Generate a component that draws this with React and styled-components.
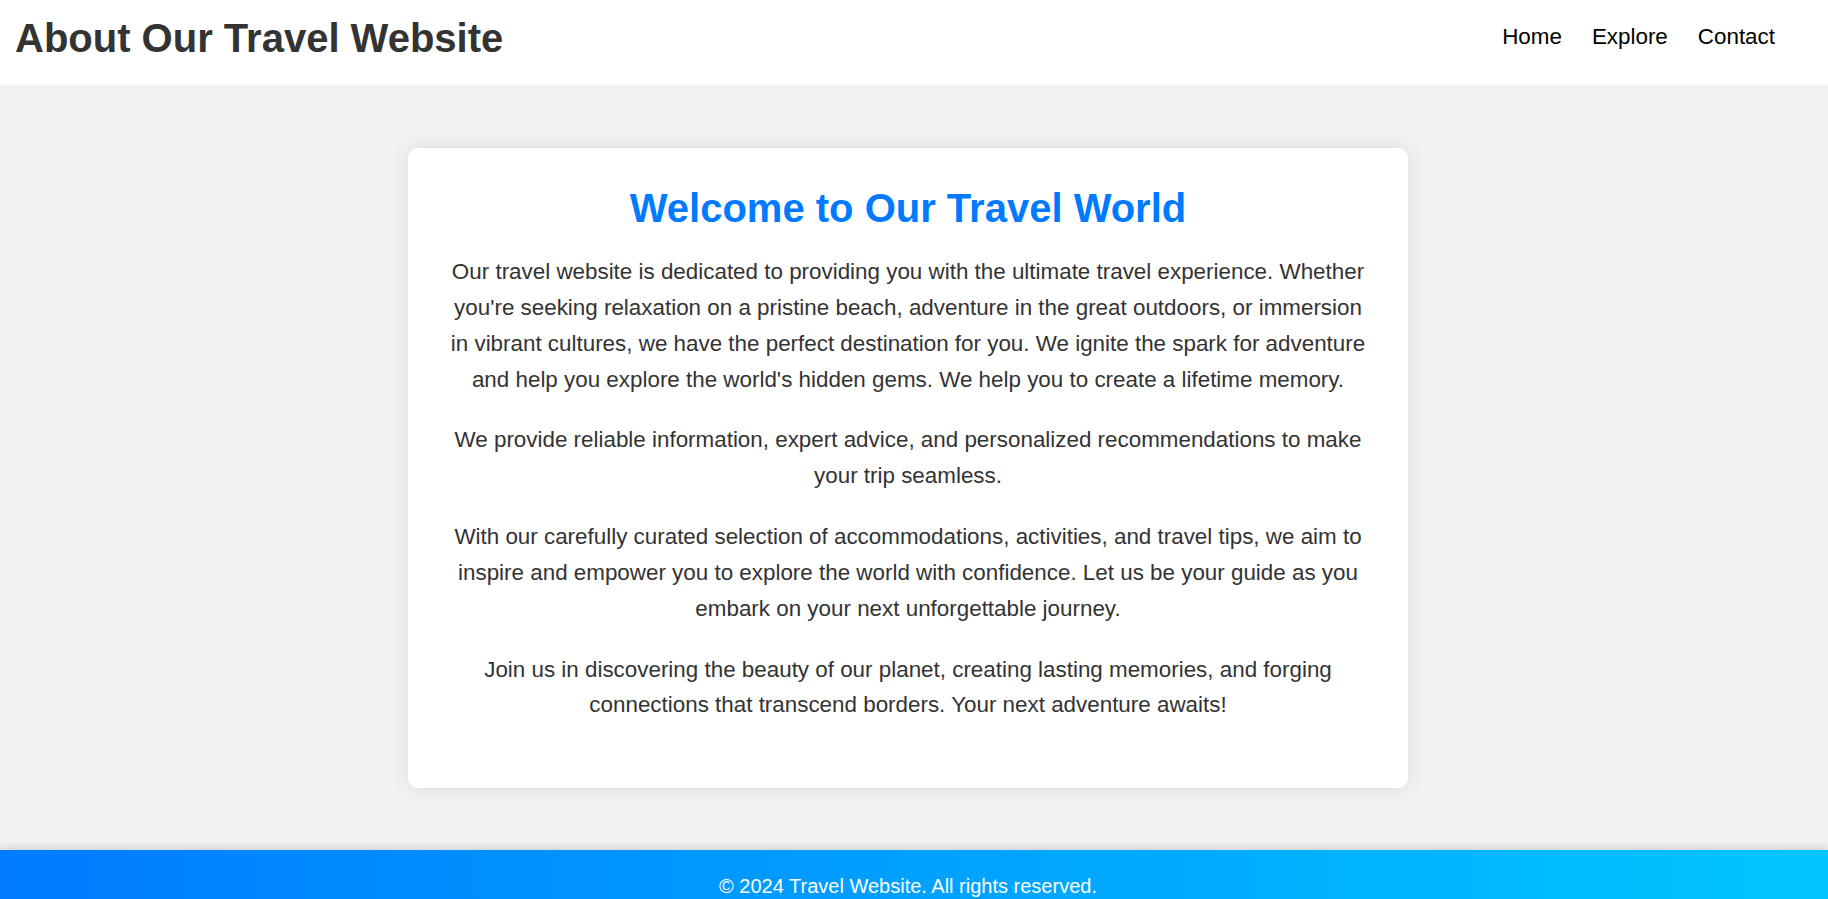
import React from "react";
import styled, { createGlobalStyle } from "styled-components";

const GlobalStyle = createGlobalStyle`
  body {
    margin: 0;
    font-family: "Liberation Sans", Arial, sans-serif;
    background: #f2f2f2;
    color: #333;
  }
`;

const Header = styled.header`
  display: flex;
  justify-content: space-between;
  align-items: flex-start;
  background: #fff;
  padding: 15px 53px 24px 15px;
`;

const SiteTitle = styled.h1`
  margin: 0;
  font-size: 40px;
  line-height: 46px;
  font-weight: bold;
  color: #333;
`;

const Nav = styled.nav`
  display: flex;
  gap: 30px;
  padding-top: 9px;
`;

const NavLink = styled.a`
  font-size: 22.4px;
  line-height: 26px;
  color: #000;
  text-decoration: none;
  cursor: pointer;
`;

// content column sits a few pixels left of the viewport centre, as in the original
const Main = styled.main`
  padding: 63px 12px 62px 0;
`;

const Card = styled.section`
  width: 1000px;
  box-sizing: border-box;
  margin: 0 auto;
  padding: 37px 40px 40px;
  background: #fff;
  border-radius: 10px;
  box-shadow: 0 0 20px rgba(0, 0, 0, 0.1);
  text-align: center;
`;

const Heading = styled.h2`
  margin: 0 0 23px;
  font-size: 40px;
  line-height: 46px;
  font-weight: bold;
  color: #007bff;
`;

const Paragraph = styled.p`
  margin: 0 0 25px;
  font-size: 22.4px;
  line-height: 1.6;
  color: #333;
`;

const Footer = styled.footer`
  background: linear-gradient(90deg, #007bff, #00c6ff);
  box-shadow: 0 -2px 8px rgba(0, 0, 0, 0.15);
  color: #fff;
  text-align: center;
  padding: 25px 12px 23px 0;
  font-size: 20px;
  line-height: 23px;
`;

const App = () => {
  return (
    <>
      <GlobalStyle />
      <Header>
        <SiteTitle>About Our Travel Website</SiteTitle>
        <Nav>
          <NavLink>Home</NavLink>
          <NavLink>Explore</NavLink>
          <NavLink>Contact</NavLink>
        </Nav>
      </Header>
      <Main>
        <Card>
          <Heading>Welcome to Our Travel World</Heading>
          <Paragraph>
            Our travel website is dedicated to providing you with the ultimate
            travel experience. Whether you're seeking relaxation on a pristine
            beach, adventure in the great outdoors, or immersion in vibrant
            cultures, we have the perfect destination for you. We ignite the
            spark for adventure and help you explore the world's hidden gems.
            We help you to create a lifetime memory.
          </Paragraph>
          <Paragraph>
            We provide reliable information, expert advice, and personalized
            recommendations to make your trip seamless.
          </Paragraph>
          <Paragraph>
            With our carefully curated selection of accommodations, activities,
            and travel tips, we aim to inspire and empower you to explore the
            world with confidence. Let us be your guide as you embark on your
            next unforgettable journey.
          </Paragraph>
          <Paragraph>
            Join us in discovering the beauty of our planet, creating lasting
            memories, and forging connections that transcend borders. Your next
            adventure awaits!
          </Paragraph>
        </Card>
      </Main>
      <Footer>© 2024 Travel Website. All rights reserved.</Footer>
    </>
  );
};

export default App;
